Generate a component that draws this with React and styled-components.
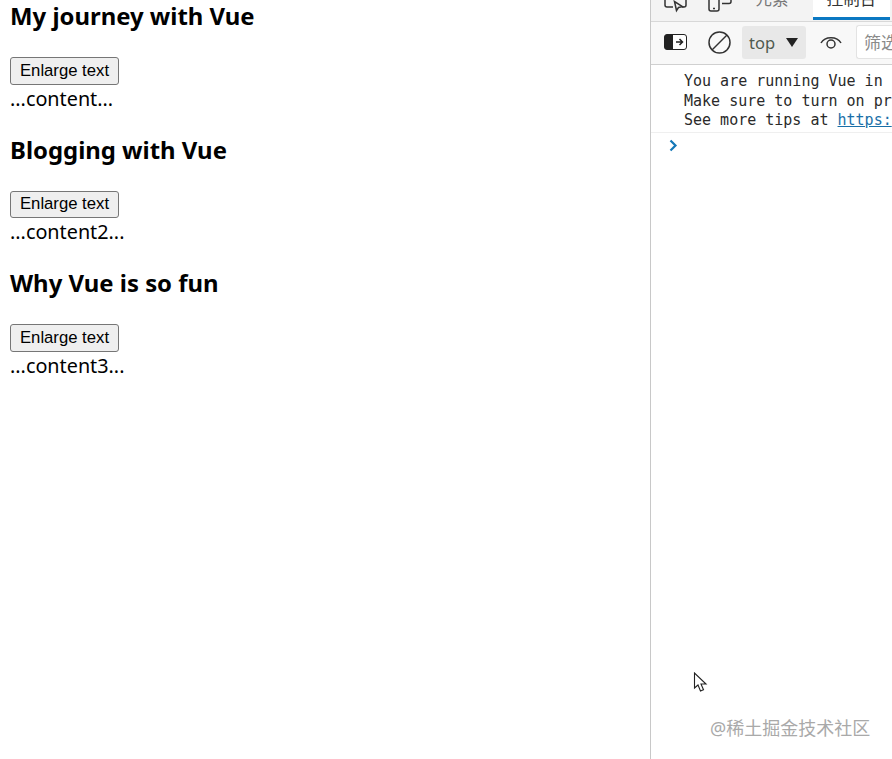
import React from "react";
import styled, { createGlobalStyle } from "styled-components";

const Global = createGlobalStyle`
  html, body { margin: 0; padding: 0; background: #fff; }
  body { font-family: "Noto Sans", "Noto Sans CJK SC", sans-serif; overflow: hidden; }
`;
const Page = styled.div`
  position: relative;
  display: flex;
  width: 892px;
  height: 759px;
  overflow: hidden;
`;
const Preview = styled.main`
  width: 650px;
  flex: none;
  padding: 0 10px;
  box-sizing: border-box;
`;
const Post = styled.section`
  height: 133.5px;
`;
const Title = styled.h3`
  margin: 0;
  height: 57px;
  box-sizing: border-box;
  font: 700 23.9px/31px "Noto Sans", sans-serif;
  color: #000;
`;
const Enlarge = styled.button`
  display: block;
  width: 109px;
  height: 27.5px;
  padding: 0;
  box-sizing: border-box;
  border: 1px solid #767676;
  border-radius: 3px;
  background: #efefef;
  color: #000;
  font: 16.7px "Liberation Sans", sans-serif;
`;
const Body = styled.div`
  font: 19.8px/28px "Noto Sans", sans-serif;
  color: #000;
`;
const Devtools = styled.aside`
  flex: 1;
  min-width: 0;
  border-left: 1px solid #c8c8c8;
  display: flex;
  flex-direction: column;
`;
const TabBar = styled.div`
  height: 22px;
  flex: none;
  box-sizing: border-box;
  display: flex;
  align-items: flex-start;
  overflow: hidden;
  background: #f3f3f3;
  border-bottom: 1px solid #d8d8d8;
`;
const TabIcon = styled.svg`
  flex: none;
  margin-left: ${(p) => p.$gap}px;
`;
const Tab = styled.div`
  flex: none;
  height: 20px;
  margin-left: ${(p) => p.$gap}px;
  width: ${(p) => p.$w}px;
  box-sizing: border-box;
  color: ${(p) => (p.$active ? "#333" : "#777")};
  background: ${(p) => (p.$active ? "#fff" : "transparent")};
  border-bottom: ${(p) => (p.$active ? "3px solid #0a78c2" : "none")};
  overflow: hidden;
  text-align: center;
`;
const TabLabel = styled.div`
  margin-top: -13px;
  font: 16.5px/22px "Noto Sans CJK SC", sans-serif;
`;
const Toolbar = styled.div`
  height: 43px;
  flex: none;
  display: flex;
  align-items: center;
  padding-bottom: 2px;
  background: #f8f8f8;
  border-bottom: 1px solid #d0d0d0;
  box-sizing: border-box;
`;
const ToolIcon = styled.svg`
  flex: none;
  margin-left: ${(p) => p.$gap}px;
`;
const Context = styled.div`
  flex: none;
  width: 64px;
  height: 33px;
  margin-left: 11px;
  padding: 0 7px;
  box-sizing: border-box;
  display: flex;
  align-items: center;
  justify-content: space-between;
  background: #e8e8e8;
  border-radius: 3px;
  font: 16.5px "Noto Sans", sans-serif;
  color: #4f5a4f;
`;
const Filter = styled.div`
  flex: none;
  width: 40px;
  height: 34px;
  margin-left: 14px;
  padding-left: 7px;
  box-sizing: border-box;
  background: #fff;
  border: 1px solid #e3e3e3;
  border-right: 0;
  border-radius: 3px 0 0 3px;
  font: 17px/32px "Noto Sans CJK SC", sans-serif;
  color: #8a8a8a;
  white-space: nowrap;
  overflow: hidden;
`;
const Log = styled.div`
  padding: 7px 0 0 33px;
  height: 68px;
  box-sizing: border-box;
  font: 15px/19.5px "DejaVu Sans Mono", monospace;
  color: #2a2a2a;
  white-space: pre;
  overflow: hidden;
  border-bottom: 1px solid #efefef;
  flex: none;
`;
const DocLink = styled.a`
  color: #1a6fa8;
  text-decoration: underline;
`;
const Prompt = styled.svg`
  margin: 6px 0 0 18px;
  flex: none;
`;
const Cursor = styled.svg`
  position: absolute;
  left: 693px;
  top: 672px;
`;
const Watermark = styled.div`
  position: absolute;
  left: 710px;
  top: 716px;
  font: 18px/24px "Noto Sans", "Noto Sans CJK SC", sans-serif;
  color: #a9a9a9;
  white-space: nowrap;
`;

const posts = [
  ["My journey with Vue", "...content..."],
  ["Blogging with Vue", "...content2..."],
  ["Why Vue is so fun", "...content3..."],
];

export default function App() {
  return (
    <Page>
      <Global />
      <Preview>
        {posts.map(([title, body]) => (
          <Post key={title}>
            <Title>{title}</Title>
            <Enlarge>Enlarge text</Enlarge>
            <Body>{body}</Body>
          </Post>
        ))}
      </Preview>
      <Devtools>
        <TabBar>
          <TabIcon $gap={13} width="24" height="13" viewBox="0 0 24 13" fill="none" stroke="#333" strokeWidth="1.5">
            <path d="M1 0v5a2 2 0 0 0 2 2h6M22 0v5a2 2 0 0 1-2 2h-2" />
            <path d="M10.5 1.5l2 9 2-3 4-.8z" fill="#f3f3f3" />
          </TabIcon>
          <TabIcon $gap={20} width="24" height="13" viewBox="0 0 24 13" fill="none" stroke="#333" strokeWidth="1.5">
            <path d="M1 0v9a2 2 0 0 0 2 2h6a2 2 0 0 0 2-2V0" />
            <path d="M5 8.5h2" />
            <path d="M14 3.5h7a2 2 0 0 0 2-2V0" />
          </TabIcon>
          <Tab $gap={14} $w={52}><TabLabel>元素</TabLabel></Tab>
          <Tab $gap={15} $w={77} $active><TabLabel>控制台</TabLabel></Tab>
        </TabBar>
        <Toolbar>
          <ToolIcon $gap={13} width="23" height="16" viewBox="0 0 23 16">
            <rect x="0.5" y="0.5" width="22" height="15" rx="2.5" fill="#fff" stroke="#222" />
            <path d="M3 0.5h6v15H3a2.5 2.5 0 0 1-2.5-2.5V3A2.5 2.5 0 0 1 3 .5z" fill="#222" />
            <path d="M12 8h6M15.5 5l3 3-3 3" fill="none" stroke="#222" strokeWidth="1.5" />
          </ToolIcon>
          <ToolIcon $gap={21} width="23" height="23" viewBox="0 0 23 23" fill="none" stroke="#333" strokeWidth="1.5">
            <circle cx="11.5" cy="11.5" r="10.5" />
            <path d="M4 19L19 4" />
          </ToolIcon>
          <Context>
            top
            <svg width="14" height="9" viewBox="0 0 14 9"><path d="M1 0h12L7 9z" fill="#222" /></svg>
          </Context>
          <ToolIcon $gap={14} width="22" height="14" viewBox="0 0 22 14" fill="none" stroke="#333" strokeWidth="1.5">
            <path d="M1 8a11 9 0 0 1 20 0" />
            <circle cx="11" cy="9" r="4" />
          </ToolIcon>
          <Filter>筛选</Filter>
        </Toolbar>
        <Log>
          {"You are running Vue in\nMake sure to turn on pr\nSee more tips at "}
          <DocLink>https:</DocLink>
        </Log>
        <Prompt width="9" height="13" viewBox="0 0 9 13" fill="none" stroke="#1478b8" strokeWidth="2.2">
          <path d="M1.5 1.5l5 5-5 5" />
        </Prompt>
      </Devtools>
      <Cursor width="15" height="21" viewBox="0 0 15 21">
        <path d="M1.5 1v15l3.5-3 2.5 6 3-1.2-2.5-5.8H13z" fill="#fff" stroke="#222" strokeWidth="1.1" />
      </Cursor>
      <Watermark>@稀土掘金技术社区</Watermark>
    </Page>
  );
}
